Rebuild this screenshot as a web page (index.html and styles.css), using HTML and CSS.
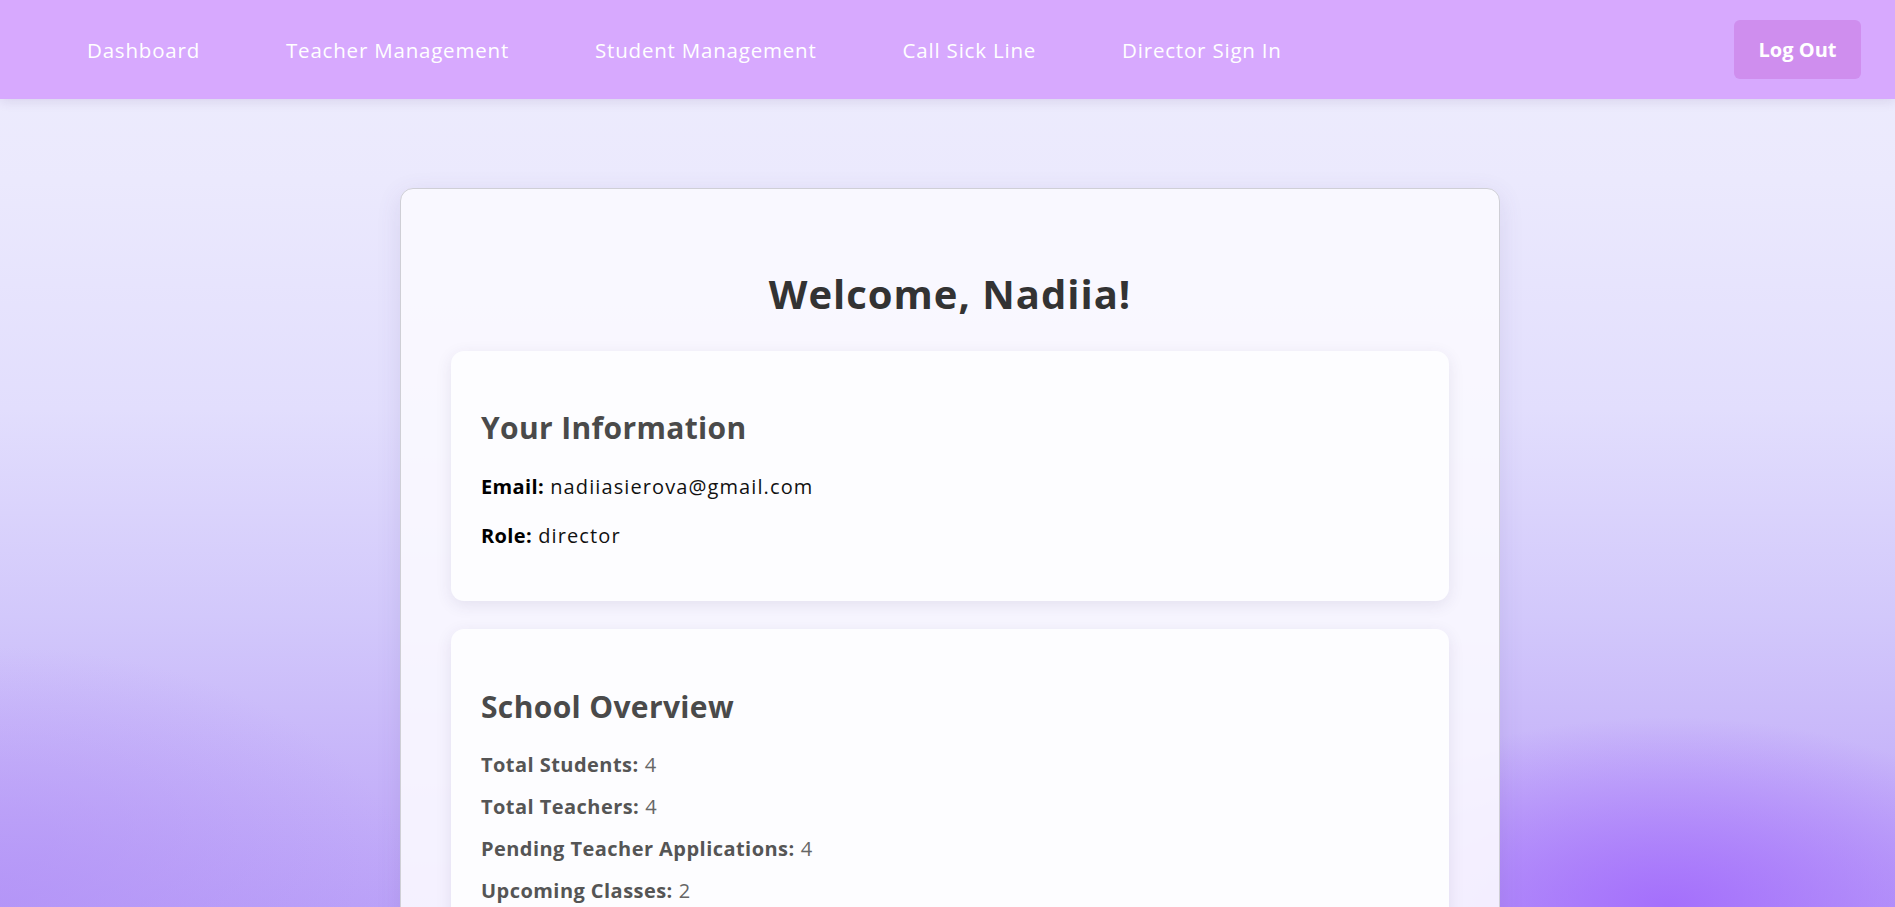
FILE: index.html
```html
<!DOCTYPE html>
<html lang="en">
<head>
<meta charset="utf-8">
<title>Director Dashboard</title>
<link rel="stylesheet" href="styles.css">
</head>
<body>
<header class="navbar">
  <nav class="nav-links">
    <a class="nav-link" href="#">Dashboard</a>
    <a class="nav-link" href="#">Teacher Management</a>
    <a class="nav-link" href="#">Student Management</a>
    <a class="nav-link" href="#">Call Sick Line</a>
    <a class="nav-link" href="#">Director Sign In</a>
  </nav>
  <button class="logout-btn" type="button">Log Out</button>
</header>
<main class="page">
  <section class="dashboard-card">
    <h1 class="welcome">Welcome, Nadiia!</h1>
    <div class="info-card">
      <h2 class="card-title">Your Information</h2>
      <p class="info-line"><strong>Email:</strong> nadiiasierova@gmail.com</p>
      <p class="info-line"><strong>Role:</strong> director</p>
    </div>
    <div class="info-card overview">
      <h2 class="card-title">School Overview</h2>
      <p class="stat-line"><strong>Total Students:</strong> 4</p>
      <p class="stat-line"><strong>Total Teachers:</strong> 4</p>
      <p class="stat-line"><strong>Pending Teacher Applications:</strong> 4</p>
      <p class="stat-line"><strong>Upcoming Classes:</strong> 2</p>
    </div>
  </section>
</main>
</body>
</html>
```
FILE: styles.css
```css
* { box-sizing: border-box; }

html, body {
  margin: 0;
  padding: 0;
}

body {
  font-family: "Open Sans", "Noto Sans", sans-serif;
  min-height: 100vh;
  background:
    radial-gradient(ellipse 380px 190px at 88% 100%, rgba(163, 108, 252, 0.95), rgba(163, 108, 252, 0) 100%),
    radial-gradient(ellipse 420px 260px at 0% 100%, rgba(178, 145, 247, 0.75), rgba(178, 145, 247, 0) 100%),
    linear-gradient(to bottom, #eeedfd 0%, #ebe9fd 20%, #e2defd 45%, #d2c8fb 68%, #c4b0f9 88%, #bba2f8 100%);
  background-attachment: fixed;
}

.navbar {
  height: 99px;
  background: #d7a9fe;
  display: flex;
  align-items: center;
  justify-content: space-between;
  padding: 0 34px 0 87px;
  box-shadow: 0 3px 10px rgba(80, 60, 120, 0.12);
  position: relative;
  z-index: 1;
}

.nav-links {
  display: flex;
  gap: 86px;
  align-items: center;
}

.nav-link {
  color: #ffffff;
  text-decoration: none;
  font-size: 20.5px;
  letter-spacing: 0.8px;
  font-weight: 400;
}

.logout-btn {
  width: 127px;
  height: 59px;
  border: none;
  border-radius: 6px;
  background: #cf8eee;
  color: #ffffff;
  font-family: inherit;
  font-size: 20px;
  font-weight: 700;
  cursor: pointer;
}

.page {
  padding: 89px 0 0 5px;
}

.dashboard-card {
  width: 1100px;
  margin: 0 auto;
  background: rgba(251, 250, 255, 0.9);
  border: 1px solid #cfcfd6;
  border-radius: 13px;
  padding: 50px 50px 40px;
  box-shadow: 0 6px 24px rgba(90, 70, 140, 0.12);
}

.welcome {
  margin: 31px 0 33px;
  text-align: center;
  font-size: 40px;
  line-height: 48px;
  letter-spacing: 1px;
  font-weight: 700;
  color: #333333;
}

.info-card {
  background: #fdfdff;
  border-radius: 13px;
  padding: 30px;
  box-shadow: 0 4px 16px rgba(60, 50, 100, 0.10);
  margin-bottom: 28px;
}

.card-title {
  margin: 29px 0 27px;
  font-size: 30px;
  line-height: 36px;
  letter-spacing: 0.35px;
  font-weight: 700;
  color: #4a4a4a;
}

.overview .card-title {
  margin-top: 30px;
  margin-bottom: 26px;
}

.info-line {
  margin: 0 0 22px;
  font-size: 20px;
  line-height: 27px;
  letter-spacing: 1.1px;
  color: #111111;
}

.info-line strong {
  color: #000000;
  letter-spacing: 0.35px;
}

.stat-line {
  margin: 0 0 15px;
  font-size: 20px;
  line-height: 27px;
  letter-spacing: 0.9px;
  color: #666666;
}

.stat-line strong {
  color: #555555;
  letter-spacing: 0.45px;
}
```
